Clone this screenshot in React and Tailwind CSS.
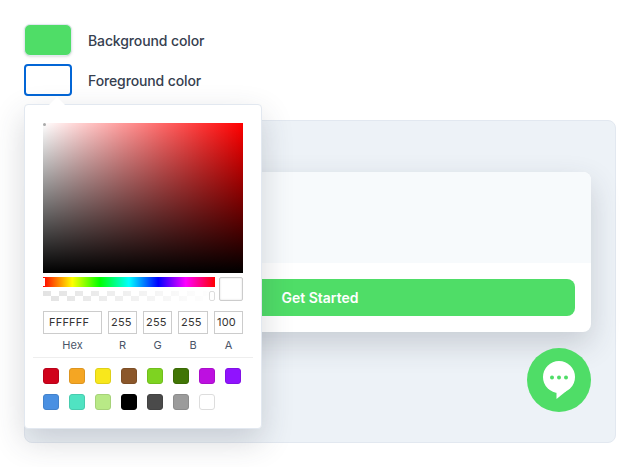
const presets = [
  ['#d0021b', '#b8021a'],
  ['#f5a623', '#dd9520'],
  ['#f8e71c', '#dfd019'],
  ['#8b572a', '#7d4e26'],
  ['#7ed321', '#71be1e'],
  ['#417505', '#3a6905'],
  ['#bd10e0', '#aa0eca'],
  ['#9013fe', '#8111e5'],
  ['#4a90e2', '#4382cb'],
  ['#50e3c2', '#48ccaf'],
  ['#b8e986', '#a6d279'],
  ['#000000', '#000000'],
  ['#4a4a4a', '#434343'],
  ['#9b9b9b', '#8c8c8c'],
  ['#ffffff', '#dddddd'],
];

function ColorRow({ label, active, color }) {
  return (
    <div className="flex items-center gap-4 h-8">
      {active ? (
        <div className="w-12 h-8 rounded-[4px] border-2 border-[#0366d6] bg-white" />
      ) : (
        <div className="w-12 h-8 rounded-[6px] border border-[#e2e8f0] shadow-sm" style={{ backgroundColor: color }} />
      )}
      <span className="text-[14px] font-medium tracking-[-0.12px] text-[#36404f]">{label}</span>
    </div>
  );
}

function Field({ value, label, width, pad }) {
  return (
    <div className={`flex flex-col items-center ${width}`}>
      <div className={`w-full h-[23px] border border-[#cccccc] flex items-center text-[11px] tracking-[0.2px] text-[#333333] ${pad}`}>
        {value}
      </div>
      <span className="mt-[4px] text-[11px] leading-[14px] text-[#4a5568]">{label}</span>
    </div>
  );
}

function Picker() {
  return (
    <div className="absolute left-6 top-[104px] w-[238px] h-[325px] bg-white border border-[#e2e8f0] rounded-[4px] shadow-[0_12px_32px_rgba(50,55,70,0.2)] px-[18px] pt-[18px]">
      <div className="absolute left-[24px] top-[-8px] w-0 h-0 border-x-[8px] border-x-transparent border-b-[8px] border-b-white" />
      <div className="relative w-[200px] h-[150px] bg-[#ff0000]">
        <div className="absolute inset-0 bg-[linear-gradient(to_right,#ffffff,rgba(255,255,255,0))]" />
        <div className="absolute inset-0 bg-[linear-gradient(to_top,#000000,rgba(0,0,0,0))]" />
        <div className="absolute left-0 top-0 w-[3px] h-[3px] rounded-full bg-[#aaaaaa]" />
      </div>
      <div className="flex justify-between mt-1">
        <div className="w-[172px]">
          <div className="relative h-[10px] bg-[linear-gradient(to_right,#f00_0%,#ff0_17%,#0f0_33%,#0ff_50%,#00f_67%,#f0f_83%,#f00_100%)]">
            <div className="absolute left-0 top-[1px] w-[2px] h-2 bg-white" />
          </div>
          <div className="relative h-[14px] overflow-hidden">
            <div className="h-[10px] mt-[4px] bg-[repeating-conic-gradient(#e3e3e3_0_25%,#ffffff_0_50%)] bg-[length:16px_10px] bg-[position:8px_0]" />
            <div className="absolute inset-0 bg-[linear-gradient(to_right,rgba(255,255,255,0),#ffffff)]" />
            <div className="absolute right-0 top-[4px] w-[6px] h-[10px] rounded-[2px] border border-[#dddddd] bg-white" />
          </div>
        </div>
        <div className="w-6 h-6 border border-[#cccccc] rounded-[2px] bg-white shadow-[inset_0_0_2px_rgba(0,0,0,0.15)]" />
      </div>
      <div className="flex justify-between mt-[10px]">
        <Field value="FFFFFF" label="Hex" width="w-[59px]" pad="pl-[5px]" />
        <Field value="255" label="R" width="w-[29px]" pad="pl-[2px]" />
        <Field value="255" label="G" width="w-[29px]" pad="pl-[2px]" />
        <Field value="255" label="B" width="w-[30px]" pad="pl-[2px]" />
        <Field value="100" label="A" width="w-[29px]" pad="pl-[2px]" />
      </div>
      <div className="h-px bg-[#eeeeee] -mx-[10px] mt-[5px]" />
      <div className="grid grid-cols-[repeat(8,16px)] gap-x-[10px] gap-y-[10px] mt-[10px]">
        {presets.map(([bg, edge]) => (
          <div
            key={bg}
            className="w-4 h-4 rounded-[3px] border"
            style={{ backgroundColor: bg, borderColor: edge }}
          />
        ))}
      </div>
    </div>
  );
}

function ChatIcon() {
  return (
    <svg width="32" height="38" viewBox="0 0 32 38">
      <circle cx="16" cy="16" r="16" fill="#ffffff" />
      <path d="M13.5 29L13.5 38L24 29.5z" fill="#ffffff" />
      <circle cx="9" cy="16.5" r="2" fill="#4fdd67" />
      <circle cx="16" cy="16.5" r="2" fill="#4fdd67" />
      <circle cx="23" cy="16.5" r="2" fill="#4fdd67" />
    </svg>
  );
}

export default function App() {
  return (
    <div className="relative w-[640px] h-[467px] overflow-hidden bg-white p-6 font-['Inter',sans-serif]">
      <div className="flex flex-col gap-2">
        <ColorRow label="Background color" color="#4fdd67" />
        <ColorRow label="Foreground color" active />
      </div>
      <div className="relative mt-6 h-[323px] rounded-lg border border-[#e2e8f0] bg-[#edf2f7] pt-[51px] px-6">
        <div className="rounded-lg bg-white shadow-[0_12px_30px_rgba(50,55,70,0.2)] overflow-hidden">
          <div className="h-[91px] bg-[#f7fafc]" />
          <div className="p-4">
            <div className="h-[37px] rounded-lg bg-[#4fdd67] flex items-center justify-center text-[14px] font-semibold text-white">
              Get Started
            </div>
          </div>
        </div>
        <div className="absolute right-6 top-[227px] w-16 h-16 rounded-full bg-[#4fdd67] flex items-center justify-center">
          <ChatIcon />
        </div>
      </div>
      <Picker />
    </div>
  );
}
